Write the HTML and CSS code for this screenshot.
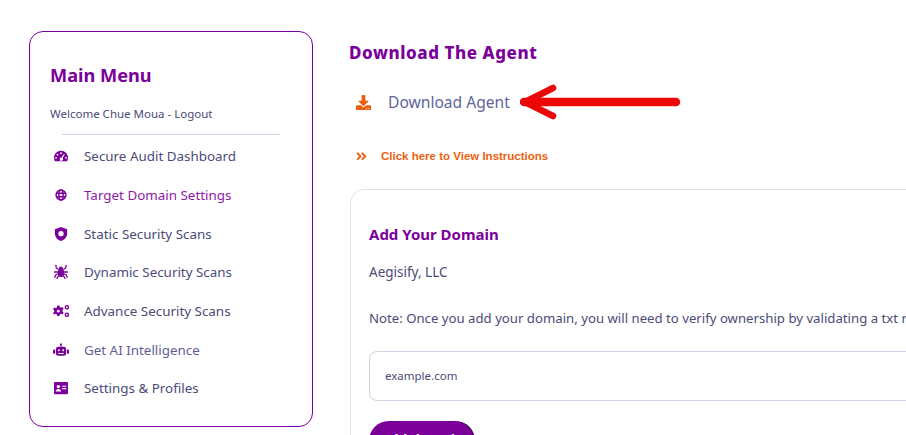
FILE: index.html
```html
<!DOCTYPE html>
<html lang="en">
<head>
<meta charset="utf-8">
<title>Download The Agent</title>
<link rel="stylesheet" href="styles.css">
</head>
<body>
<div class="page">
  <aside class="sidebar">
    <h2 class="menu-title">Main Menu</h2>
    <p class="welcome">Welcome Chue Moua - <a class="logout" href="#">Logout</a></p>
    <hr class="rule">
    <ul class="menu">
      <li class="item">
        <svg class="ico" viewBox="0 0 24 24"><path fill-rule="evenodd" d="M12 3C5.400 3 0 8.400 0 15c0 2.200.6 4.300 1.600 6h20.800c1-1.700 1.600-3.800 1.600-6 0-6.600-5.400-12-12-12zM12 5.500a1.600 1.600 0 1 1 0 3.200 1.600 1.600 0 0 1 0-3.200zM6 8a1.600 1.600 0 1 1 0 3.200A1.600 1.600 0 0 1 6 8zM3.500 13.500a1.600 1.600 0 1 1 0 3.200 1.600 1.600 0 0 1 0-3.200zM20.500 13.500a1.600 1.600 0 1 1 0 3.200 1.600 1.600 0 0 1 0-3.200zM17 8.500l1.500.8-3.800 6.200a2.800 2.800 0 1 1-1.600-.9z"/></svg>
        <span>Secure Audit Dashboard</span>
      </li>
      <li class="item active">
        <svg class="ico" viewBox="-3 -3 30 30"><circle cx="12" cy="12" r="10.500" fill="none" stroke="currentColor" stroke-width="3.200"/><ellipse cx="12" cy="12" rx="4.500" ry="10.500" fill="none" stroke="currentColor" stroke-width="3.200"/><path d="M1.500 8.500h21M1.500 15.500h21" stroke="currentColor" stroke-width="3.200"/></svg>
        <span>Target Domain Settings</span>
      </li>
      <li class="item">
        <svg class="ico" viewBox="0 0 24 24"><path fill-rule="evenodd" d="M12 0 1.500 4v7c0 6.500 4.800 11 10.500 13 5.700-2 10.500-6.500 10.500-13V4zm0 7a4.500 4.500 0 1 1 0 9 4.500 4.500 0 0 1 0-9z"/></svg>
        <span>Static Security Scans</span>
      </li>
      <li class="item">
        <svg class="ico" viewBox="0 0 24 24"><ellipse cx="12" cy="13.500" rx="5.500" ry="7"/><circle cx="12" cy="6" r="3.500"/><path d="M8 8 4 5 3 0M16 8l4-3 1-5M7 12H0M17 12h7M7 15l-4 2-2 5M17 15l4 2 2 5M9 18l-3 3-1 3M15 18l3 3 1 3" fill="none" stroke="currentColor" stroke-width="2.200"/></svg>
        <span>Dynamic Security Scans</span>
      </li>
      <li class="item">
        <svg class="ico wide" viewBox="0 0 30 24"><path d="M9 1.500h4l.7 3 2.300 1.200 2.900-1.200 2.100 3.500-2.200 2.100v2.800l2.200 2.100-2.100 3.500-2.900-1.200-2.300 1.200-.7 3H9l-.7-3-2.300-1.200-2.900 1.200L1 15.800l2.200-2.100v-2.800L1 8.800l2.100-3.500L6 6.500l2.300-1.200z" transform="translate(-1 0)"/><circle cx="10" cy="12.300" r="2.600" fill="#fff"/><circle cx="26" cy="5" r="3" fill="none" stroke="currentColor" stroke-width="2.600"/><circle cx="26" cy="19" r="3" fill="none" stroke="currentColor" stroke-width="2.600"/></svg>
        <span>Advance Security Scans</span>
      </li>
      <li class="item muted">
        <svg class="ico wide" viewBox="0 0 30 24"><rect x="5.500" y="6" width="19" height="17" rx="4"/><rect x="14" y="0" width="2" height="6"/><circle cx="15" cy="1.500" r="1.800"/><rect x="0" y="11" width="4" height="8" rx="1.500"/><rect x="26" y="11" width="4" height="8" rx="1.500"/><circle cx="11" cy="12.500" r="1.800" fill="#fff"/><circle cx="19" cy="12.500" r="1.800" fill="#fff"/><rect x="10" y="17.500" width="10" height="2" fill="#fff"/></svg>
        <span>Get AI Intelligence</span>
      </li>
      <li class="item">
        <svg class="ico" viewBox="0 0 24 24"><rect x="0" y="1.500" width="24" height="21" rx="2"/><circle cx="7.500" cy="9.500" r="2.800" fill="#fff"/><path d="M2.800 18c0-3 2-4.500 4.700-4.500s4.700 1.500 4.700 4.500z" fill="#fff"/><path d="M14 8h7v2h-7zM14 12h7v2h-7z" fill="#fff"/></svg>
        <span>Settings &amp; Profiles</span>
      </li>
    </ul>
  </aside>
  <main class="main">
    <h2 class="section-title">Download The Agent</h2>
    <div class="download-row">
      <svg class="dl-ico" viewBox="0 0 512 512"><path d="M216 0h80c13.300 0 24 10.700 24 24v168h87.700c17.800 0 26.700 21.500 14.100 34.100L269.700 378.300c-7.500 7.500-19.800 7.500-27.300 0L90.100 226.100c-12.600-12.600-3.700-34.100 14.100-34.100H192V24c0-13.300 10.700-24 24-24zm296 376v112c0 13.300-10.700 24-24 24H24c-13.300 0-24-10.700-24-24V376c0-13.300 10.700-24 24-24h146.700l49 49c20.100 20.100 52.500 20.100 72.600 0l49-49H488c13.300 0 24 10.700 24 24zm-124 88c0-11-9-20-20-20s-20 9-20 20 9 20 20 20 20-9 20-20zm64 0c0-11-9-20-20-20s-20 9-20 20 9 20 20 20 20-9 20-20z"/></svg>
      <a class="dl-link" href="#">Download Agent</a>
      <svg class="arrow" viewBox="0 0 170 40"><path d="M4 20h152" stroke="#ed0808" stroke-width="8.500" stroke-linecap="round" fill="none"/><path d="M33 6 5 20l28 14" stroke="#ed0808" stroke-width="6.500" stroke-linecap="round" stroke-linejoin="round" fill="none"/></svg>
    </div>
    <div class="instr-row">
      <svg class="instr-ico" viewBox="0 0 448 512"><path d="M224.300 273l-136 136c-9.400 9.400-24.600 9.400-33.900 0l-22.600-22.600c-9.400-9.400-9.400-24.600 0-33.900l96.400-96.400-96.400-96.400c-9.400-9.400-9.400-24.600 0-33.900L54.300 103c9.400-9.400 24.600-9.400 33.900 0l136 136c9.500 9.400 9.500 24.600.1 34zm192-34l-136-136c-9.400-9.400-24.600-9.400-33.900 0l-22.600 22.600c-9.400 9.400-9.400 24.600 0 33.900l96.400 96.400-96.400 96.400c-9.400 9.400-9.400 24.600 0 33.900l22.600 22.600c9.400 9.400 24.600 9.400 33.900 0l136-136c9.400-9.200 9.400-24.400 0-33.800z"/></svg>
      <a class="instr-link" href="#">Click here to View Instructions</a>
    </div>
    <section class="card">
      <h3 class="card-title">Add Your Domain</h3>
      <p class="card-org">Aegisify, LLC</p>
      <p class="card-note">Note: Once you add your domain, you will need to verify ownership by validating a txt record on your DNS server.</p>
      <div class="input">example.com</div>
      <button class="btn" type="button">Add domain</button>
    </section>
  </main>
</div>
</body>
</html>
```

FILE: styles.css
```css
* { box-sizing: border-box; }
html, body { margin: 0; height: 435px; overflow: hidden; background: #fff; }
body { font-family: "Noto Sans", "Open Sans", sans-serif; color: #4b4b78; }
.page { display: flex; align-items: flex-start; gap: 37px; padding: 31px 0 0 29px; }

.sidebar { flex: none; width: 284px; height: 396px; border: 1px solid #7b0099; border-radius: 14px; padding: 30px 20px 0; }
.menu-title { margin: 0; font-size: 18.200px; line-height: 26px; font-weight: 700; color: #7b0099; }
.welcome { margin: 18px 0 0; font-size: 11.500px; line-height: 16px; white-space: nowrap; }
.logout { color: #4b4b78; text-decoration: none; }
.rule { margin: 12px 12px 0; border: 0; border-top: 1px solid #ccd5e6; }
.menu { list-style: none; margin: 2px 0 0; padding: 0; }
.item { display: flex; align-items: center; height: 38.670px; font-size: 13.400px; white-space: nowrap; }
.item.active { color: #8f1aa8; }
.item.muted { color: #625c96; }
.ico { flex: none; width: 14px; height: 14px; margin: 0 16px 0 4px; fill: #7b0099; color: #7b0099; }
.ico.wide { width: 16px; margin: 0 15px 0 3px; }

.main { flex: none; width: 800px; }
.section-title { margin: 11px 0 0 -1px; font-size: 17px; line-height: 22px; font-weight: 800; letter-spacing: .55px; color: #7b0099; }
.download-row { position: relative; display: flex; align-items: center; height: 36px; margin-top: 20px; padding-left: 6px; }
.dl-ico { flex: none; width: 15px; height: 15px; fill: #ec5f0e; }
.dl-link { margin-left: 17px; font-size: 15.600px; color: #61659c; text-decoration: none; }
.arrow { position: absolute; left: 170px; top: -2px; width: 170px; height: 40px; }
.instr-row { display: flex; align-items: center; height: 20px; margin-top: 26px; padding-left: 6px; }
.instr-ico { flex: none; width: 11px; height: 12.600px; fill: #ec5f0e; }
.instr-link { margin-left: 14px; font-family: "Liberation Sans", Arial, sans-serif; font-weight: 700; font-size: 11.500px; color: #ec5f0e; text-decoration: none; }

.card { margin-top: 23px; height: 400px; border: 1px solid #dde2ea; border-radius: 14px; padding: 33px 18px 0; }
.card-title { margin: 0; font-size: 15px; line-height: 22px; font-weight: 700; color: #7b0099; }
.card-org { margin: 17px 0 0; font-size: 13.500px; line-height: 20px; }
.card-note { margin: 26px 0 0; font-size: 13.200px; line-height: 20px; white-space: nowrap; }
.input { margin-top: 23px; height: 50px; border: 1px solid #ccd5e6; border-radius: 8px; padding: 0 15px; font-size: 11.500px; line-height: 48px; }
.btn { display: block; margin-top: 20px; width: 106px; height: 40px; padding: 0 0 4px; border: 0; border-radius: 20px; background: #7b0099; box-shadow: inset -1.500px 0 0 #4a0a58; color: #fff; font: 700 14px "Noto Sans", sans-serif; }
```
